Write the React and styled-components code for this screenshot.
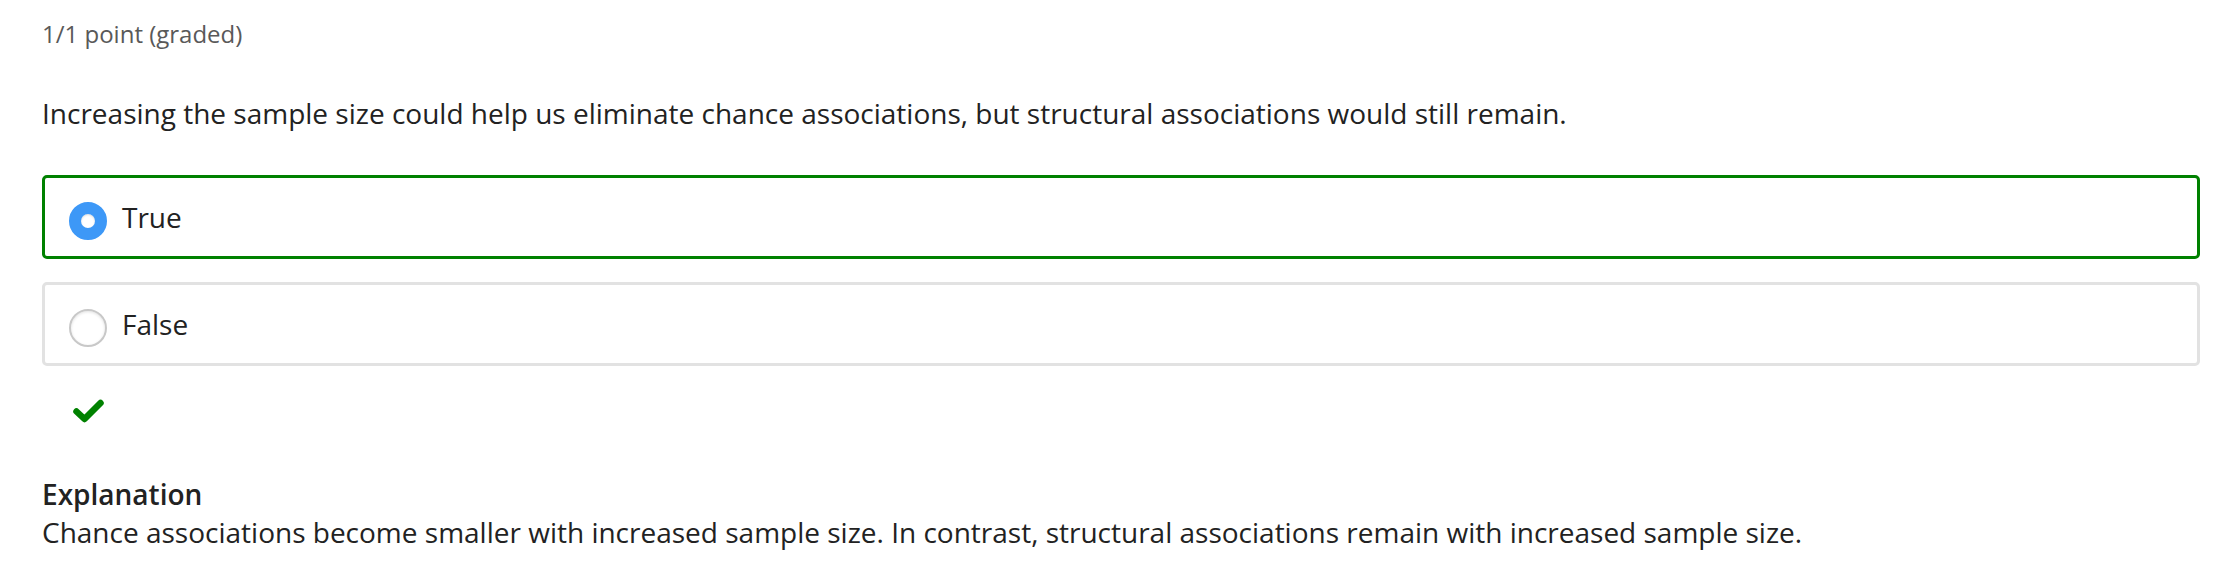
import React from "react";
import styled, { createGlobalStyle } from "styled-components";

const Global = createGlobalStyle`
  html, body { margin: 0; padding: 0; background: #fff; }
  body { font-family: "Open Sans", "Noto Sans", sans-serif; color: #222; }
`;

const Page = styled.div`
  padding: 19px 34px 0 42px;
`;

const Status = styled.div`
  font-size: 24px;
  line-height: 30px;
  color: #595959;
`;

const Question = styled.p`
  margin: 43px 0 0;
  font-size: 28px;
  line-height: 42px;
  color: #222;
`;

const Choices = styled.div`
  margin-top: 41px;
  display: flex;
  flex-direction: column;
  gap: 23px;
`;

const Choice = styled.label`
  display: flex;
  align-items: center;
  gap: 15px;
  height: 84px;
  box-sizing: border-box;
  padding: 0 24px;
  border: 3px solid ${(p) => (p.$correct ? "#008100" : "#e2e2e2")};
  border-radius: 5px;
  font-size: 28px;
  line-height: 42px;
  color: #222;
`;

const Radio = styled.span`
  width: 38px;
  height: 38px;
  margin-top: 7px;
  border-radius: 50%;
  box-sizing: border-box;
  flex: none;
  ${(p) =>
    p.$checked
      ? `border: 12.5px solid #3d98f7; background: #fff; box-shadow: inset 0 1px 2px rgba(0,0,0,0.15);`
      : `background: #fff; border: 2px solid #c8c8c8; box-shadow: inset 0 1px 3px rgba(0,0,0,0.12);`}
`;

const Status2 = styled.div`
  margin-top: 33px;
  padding-left: 31px;
  height: 24px;
  display: flex;
  align-items: center;
`;

const Explanation = styled.div`
  margin-top: 52px;
  font-size: 28px;
  line-height: 38px;
  color: #222;
`;

const ExplTitle = styled.div`
  font-weight: 600;
`;

const Check = () => (
  <svg width="31" height="24" viewBox="0 0 31 24">
    <path
      d="M3.5 12.5 L11.5 20 L27.5 4"
      fill="none"
      stroke="#008100"
      strokeWidth="6.5"
      strokeLinecap="round"
      strokeLinejoin="round"
    />
  </svg>
);

export default function App() {
  return (
    <>
      <Global />
      <Page>
        <Status>1/1 point (graded)</Status>
        <Question>
          Increasing the sample size could help us eliminate chance associations, but structural associations would still remain.
        </Question>
        <Choices>
          <Choice $correct>
            <Radio $checked />
            True
          </Choice>
          <Choice>
            <Radio />
            False
          </Choice>
        </Choices>
        <Status2>
          <Check />
        </Status2>
        <Explanation>
          <ExplTitle>Explanation</ExplTitle>
          <div>
            Chance associations become smaller with increased sample size. In contrast, structural associations remain with increased sample size.
          </div>
        </Explanation>
      </Page>
    </>
  );
}
